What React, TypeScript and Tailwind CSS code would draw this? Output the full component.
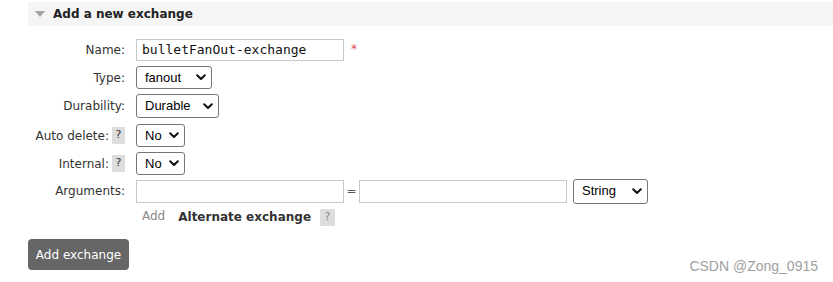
import React from 'react';

const Chevron = () => (
  <svg width="10" height="7" viewBox="0 0 10 7" className="shrink-0">
    <path d="M1.2 1.2 L5 5 L8.8 1.2" fill="none" stroke="#111" strokeWidth="2" strokeLinecap="round" strokeLinejoin="round" />
  </svg>
);

const FakeSelect = ({ value, width, height = 23 }: { value: string; width: string; height?: number }) => (
  <div
    className={`${width} flex items-center justify-between pl-[8px] pr-[5px] border border-[#767676] rounded-[3px] bg-white font-['Liberation_Sans',sans-serif] text-[13px] text-black`}
    style={{ height }}
  >
    <span>{value}</span>
    <Chevron />
  </div>
);

const Help = ({ className = '' }: { className?: string }) => (
  <span className={`inline-flex items-center justify-center bg-[#dddddd] text-[#333] text-[11px] ${className}`}>?</span>
);

const Row = ({ label, children, className = '' }: { label: React.ReactNode; children: React.ReactNode; className?: string }) => (
  <div className={`flex items-center ${className}`}>
    <div className="w-[125px] flex justify-end items-center">{label}</div>
    <div className="ml-[11px] flex items-center">{children}</div>
  </div>
);

export default function App() {
  return (
    <div className="relative w-[833px] h-[282px] bg-white overflow-hidden font-['DejaVu_Sans',Verdana,sans-serif] text-[12px] text-[#333]">
      <div className="ml-[28px] mt-[2px] h-[24px] bg-[#f5f5f5] flex items-center pl-[7px]">
        <svg width="10" height="6" viewBox="0 0 10 6">
          <path d="M0 0 L10 0 L5 6 Z" fill="#a6a6a6" />
        </svg>
        <span className="ml-[8px] font-bold text-[#222]">Add a new exchange</span>
      </div>

      <Row label="Name:" className="mt-[13px] h-[22px]">
        <div className="w-[208px] h-[22px] border border-[#c8c8c8] flex items-center pl-[5px] font-['DejaVu_Sans_Mono',monospace] text-[13px] text-[#111]">
          bulletFanOut-exchange
        </div>
        <span className="ml-[7px] text-[#e05050] text-[12px] self-start mt-[1px]">*</span>
      </Row>

      <Row label="Type:" className="mt-[5px] h-[23px]">
        <FakeSelect value="fanout" width="w-[76px]" />
      </Row>

      <Row label="Durability:" className="mt-[5px] h-[24px]">
        <FakeSelect value="Durable" width="w-[83px]" height={24} />
      </Row>

      <Row
        label={
          <>
            <span>Auto delete:</span>
            <Help className="ml-[3px] w-[13px] h-[17px]" />
          </>
        }
        className="mt-[6px] h-[23px]"
      >
        <FakeSelect value="No" width="w-[49px]" />
      </Row>

      <Row
        label={
          <>
            <span>Internal:</span>
            <Help className="ml-[3px] w-[13px] h-[17px]" />
          </>
        }
        className="mt-[5px] h-[23px]"
      >
        <FakeSelect value="No" width="w-[49px]" />
      </Row>

      <Row label="Arguments:" className="mt-[4px] h-[24px]">
        <div className="w-[208px] h-[23px] border border-[#c8c8c8] bg-white" />
        <span className="w-[15px] text-center text-[#555]">=</span>
        <div className="w-[208px] h-[23px] border border-[#c8c8c8] bg-white" />
        <div className="ml-[6px]">
          <FakeSelect value="String" width="w-[75px]" height={25} />
        </div>
      </Row>

      <Row label="" className="mt-[5px] h-[18px]">
        <span className="ml-[6px] text-[#888] -mt-[2px]">Add</span>
        <span className="ml-[13px] font-bold text-[#333]">Alternate exchange</span>
        <Help className="ml-[9px] w-[15px] h-[17px] text-[#888]" />
      </Row>

      <button className="ml-[28px] mt-[13px] w-[101px] h-[31px] rounded-[4px] bg-[#666666] text-white text-[12px] flex items-center justify-center">
        Add exchange
      </button>

      <div className="absolute right-[15px] top-[256px] font-['Liberation_Sans',sans-serif] text-[14px] text-[#a0a0a0]">
        CSDN @Zong_0915
      </div>
    </div>
  );
}
